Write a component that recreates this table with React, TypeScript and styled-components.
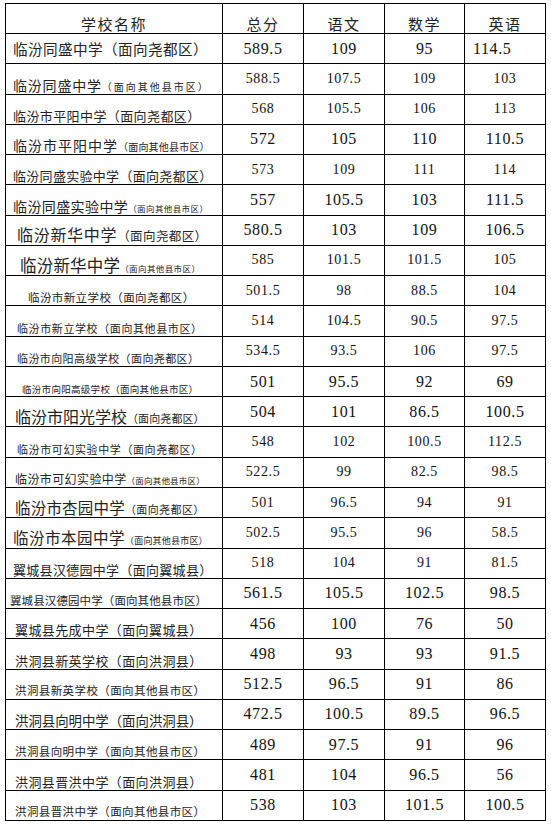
import React from 'react'
import styled, { createGlobalStyle } from 'styled-components'

const GlobalStyle = createGlobalStyle`
  html, body {
    margin: 0;
    padding: 0;
    background: #ffffff;
  }
  body {
    font-family: "Noto Sans CJK SC", "Liberation Serif", serif;
    color: #000;
  }
`

const Page = styled.div`
  padding: 3px 0 0 5px;
  width: 551px;
  height: 824px;
  box-sizing: border-box;
  overflow: hidden;
`

const Table = styled.table`
  border-collapse: collapse;
  table-layout: fixed;
  width: 540px;
`

const HeadRow = styled.tr`
  height: 30px;
`

const Row = styled.tr`
  height: 30.27px;
`

const HeadCell = styled.th`
  border: 1px solid #000;
  padding: 0 0 2px;
  vertical-align: bottom;
  font-weight: normal;
  font-size: 15px;
  letter-spacing: 1.5px;
  line-height: 1;
  text-align: center;
  color: #222;
  font-family: "Noto Sans CJK SC", sans-serif;
`

const NameCell = styled.td<{ $pl: number; $mid?: boolean }>`
  border: 1px solid #000;
  padding: 0 0 ${(p) => (p.$mid ? 0 : 2)}px ${(p) => p.$pl}px;
  vertical-align: ${(p) => (p.$mid ? 'middle' : 'bottom')};
  white-space: nowrap;
  overflow: hidden;
  line-height: 1;
  color: #222;
  font-family: "Noto Sans CJK SC", sans-serif;
`

const Part = styled.span<{ $size: number; $ls: number }>`
  font-size: ${(p) => p.$size}px;
  letter-spacing: ${(p) => p.$ls}px;
`

const ScoreCell = styled.td<{ $big: boolean; $left?: boolean }>`
  border: 1px solid #000;
  padding: 0 0 0 ${(p) => (p.$left ? 8 : 0)}px;
  text-align: ${(p) => (p.$left ? 'left' : 'center')};
  vertical-align: middle;
  font-family: "Liberation Serif", "DejaVu Serif", serif;
  font-size: ${(p) => (p.$big ? 16 : 14)}px;
  letter-spacing: 0.6px;
  line-height: 1;
  color: #111;
`

type Seg = [string, number, number]

interface School {
  name: Seg[]
  pl: number
  mid?: boolean
  big: boolean
  scores: string[]
  engLeft?: boolean
}

const schools: School[] = [
  { name: [['临汾同盛中学（面向尧都区）', 14.6, 0.4]], pl: 7, mid: true, big: true, scores: ['589.5', '109', '95', '114.5'], engLeft: true },
  { name: [['临汾同盛中学', 14, 0.8], ['（面向其他县市区）', 10, 2]], pl: 7, big: false, scores: ['588.5', '107.5', '109', '103'] },
  { name: [['临汾市平阳中学（面向尧都区）', 13, 0.4]], pl: 7, big: false, scores: ['568', '105.5', '106', '113'] },
  { name: [['临汾市平阳中学', 14, 1], ['（面向其他县市区）', 10, 0.2]], pl: 7, big: true, scores: ['572', '105', '110', '110.5'] },
  { name: [['临汾同盛实验中学（面向尧都区）', 13, 0.3]], pl: 7, big: false, scores: ['573', '109', '111', '114'] },
  { name: [['临汾同盛实验中学', 14, 0.4], ['（面向其他县市区）', 8.5, 0.4]], pl: 7, big: true, scores: ['557', '105.5', '103', '111.5'] },
  { name: [['临汾新华中学', 16, 0.7], ['（面向尧都区）', 12.5, 0.4]], pl: 11, big: true, scores: ['580.5', '103', '109', '106.5'] },
  { name: [['临汾新华中学', 16.5, 0.2], ['（面向其他县市区）', 8.5, 0.4]], pl: 14, big: false, scores: ['585', '101.5', '101.5', '105'] },
  { name: [['临汾市新立学校（面向尧都区）', 11.5, 0.4]], pl: 22, big: false, scores: ['501.5', '98', '88.5', '104'] },
  { name: [['临汾市新立学校（面向其他县市区）', 11, 0.6]], pl: 11, big: false, scores: ['514', '104.5', '90.5', '97.5'] },
  { name: [['临汾市向阳高级学校（面向尧都区）', 11, 0.4]], pl: 11, big: false, scores: ['534.5', '93.5', '106', '97.5'] },
  { name: [['临汾市向阳高级学校（面向其他县市区）', 9.5, 0.3]], pl: 16, big: true, scores: ['501', '95.5', '92', '69'] },
  { name: [['临汾市阳光学校', 16, 0], ['（面向尧都区）', 11, 0.1]], pl: 9, big: true, scores: ['504', '101', '86.5', '100.5'] },
  { name: [['临汾市可幻实验中学（面向尧都区）', 11, 0.6]], pl: 11, big: false, scores: ['548', '102', '100.5', '112.5'] },
  { name: [['临汾市可幻实验中学', 12, 0.4], ['（面向其他县市区）', 8.5, 0.2]], pl: 9, big: false, scores: ['522.5', '99', '82.5', '98.5'] },
  { name: [['临汾市杏园中学', 15.5, 0.2], ['（面向尧都区）', 11, 0.4]], pl: 9, big: false, scores: ['501', '96.5', '94', '91'] },
  { name: [['临汾市本园中学', 15.5, 0.5], ['（面向其他县市区）', 9, 0.2]], pl: 7, big: false, scores: ['502.5', '95.5', '96', '58.5'] },
  { name: [['翼城县汉德园中学（面向翼城县）', 13, 0.3]], pl: 7, big: false, scores: ['518', '104', '91', '81.5'] },
  { name: [['翼城县汉德园中学（面向其他县市区）', 11.5, 0.1]], pl: 4, big: true, scores: ['561.5', '105.5', '102.5', '98.5'] },
  { name: [['翼城县先成中学（面向翼城县）', 13, 0.4]], pl: 9, big: true, scores: ['456', '100', '76', '50'] },
  { name: [['洪洞县新英学校（面向洪洞县）', 13, 0.4]], pl: 9, big: true, scores: ['498', '93', '93', '91.5'] },
  { name: [['洪洞县新英学校（面向其他县市区）', 11.5, 0.4]], pl: 9, big: true, scores: ['512.5', '96.5', '91', '86'] },
  { name: [['洪洞县向明中学（面向洪洞县）', 13.4, 0]], pl: 9, big: true, scores: ['472.5', '100.5', '89.5', '96.5'] },
  { name: [['洪洞县向明中学（面向其他县市区）', 11.5, 0.4]], pl: 9, big: true, scores: ['489', '97.5', '91', '96'] },
  { name: [['洪洞县晋洪中学（面向洪洞县）', 13, 0.4]], pl: 9, big: true, scores: ['481', '104', '96.5', '56'] },
  { name: [['洪洞县晋洪中学（面向其他县市区）', 11.5, 0.4]], pl: 9, big: true, scores: ['538', '103', '101.5', '100.5'] },
]

const App = () => {
  return (
    <Page>
      <GlobalStyle />
      <Table>
        <colgroup>
          <col style={{ width: 217 }} />
          <col style={{ width: 81 }} />
          <col style={{ width: 81 }} />
          <col style={{ width: 80 }} />
          <col style={{ width: 81 }} />
        </colgroup>
        <thead>
          <HeadRow>
            <HeadCell>学校名称</HeadCell>
            <HeadCell>总分</HeadCell>
            <HeadCell>语文</HeadCell>
            <HeadCell>数学</HeadCell>
            <HeadCell>英语</HeadCell>
          </HeadRow>
        </thead>
        <tbody>
          {schools.map((s, i) => (
            <Row key={i}>
              <NameCell $pl={s.pl} $mid={s.mid}>
                {s.name.map(([text, size, ls], j) => (
                  <Part key={j} $size={size} $ls={ls}>
                    {text}
                  </Part>
                ))}
              </NameCell>
              {s.scores.map((v, j) => (
                <ScoreCell key={j} $big={s.big} $left={j === 3 && s.engLeft}>
                  {v}
                </ScoreCell>
              ))}
            </Row>
          ))}
        </tbody>
      </Table>
    </Page>
  )
}

export default App
